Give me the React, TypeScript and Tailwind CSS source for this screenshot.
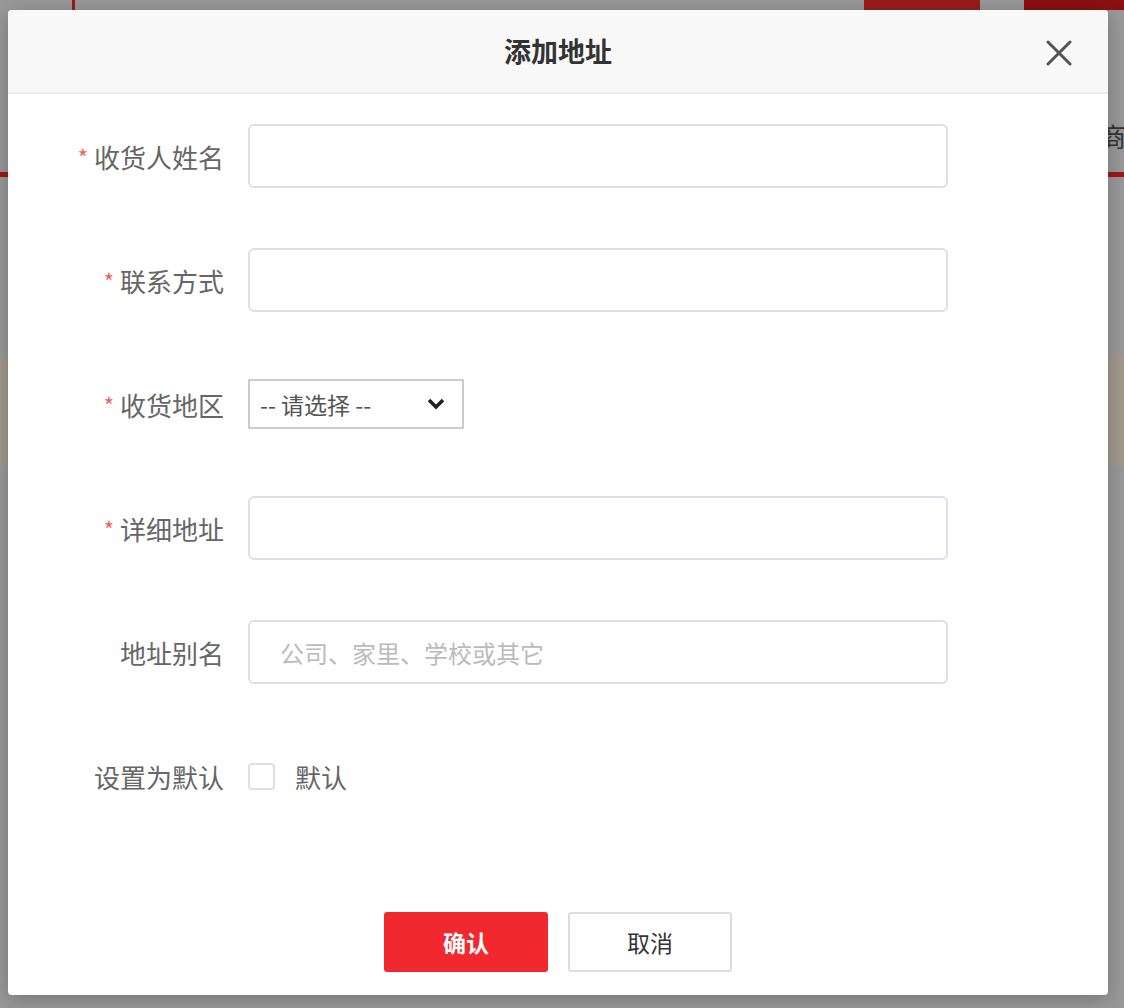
const font = { fontFamily: '"Noto Sans CJK SC", "Noto Sans", sans-serif' };

function Label({ text, required }: { text: string; required?: boolean }) {
  return (
    <div className="w-[240px] pr-[24px] flex justify-end items-center text-[26px] text-[#666]">
      {required && <span className="text-[#f06060] mr-[6px] text-[22px]">*</span>}
      {text}
    </div>
  );
}

function TextRow({ label, required, placeholder }: { label: string; required?: boolean; placeholder?: string }) {
  return (
    <div className="h-[124px] flex items-center">
      <Label text={label} required={required} />
      <input
        placeholder={placeholder}
        className="w-[700px] h-[64px] border-2 border-[#dcdfe6] rounded-[6px] px-[30px] text-[24px] text-[#333] placeholder:text-[#bbb] outline-none"
        style={font}
      />
    </div>
  );
}

export default function App() {
  return (
    <div className="relative w-[1124px] h-[1008px] bg-[#999] overflow-hidden" style={font}>
      {/* page behind overlay */}
      <div className="absolute left-[72px] top-0 w-[3px] h-[10px] bg-[#9b1b1b]" />
      <div className="absolute left-[864px] top-0 w-[116px] h-[10px] bg-[#9b1b1b]" />
      <div className="absolute left-[1024px] top-0 w-[100px] h-[10px] bg-[#8b1010]" />
      <div className="absolute left-0 top-[172px] w-[8px] h-[5px] bg-[#9b1b1b]" />
      <div className="absolute left-[1108px] top-[172px] w-[16px] h-[5px] bg-[#9b1b1b]" />
      <div className="absolute left-[1100px] top-[116px] text-[26px] text-[#333]">商</div>
      <div className="absolute left-0 top-[355px] w-[8px] h-[110px] bg-[#a39a8e]" />
      <div className="absolute left-[1108px] top-[355px] w-[16px] h-[110px] bg-[#a39a8e]" />

      <div className="absolute left-[8px] top-[10px] w-[1100px] h-[985px] bg-white rounded-[4px] shadow-[0_4px_20px_rgba(0,0,0,0.25)] flex flex-col overflow-hidden">
        <div className="h-[84px] bg-[#f8f8f8] border-b-2 border-[#ebebeb] flex items-center justify-center relative">
          <span className="text-[27px] font-bold text-[#333]">添加地址</span>
          <svg className="absolute right-[36px] top-[30px]" width="26" height="26" viewBox="0 0 26 26">
            <path d="M2 2L24 24M24 2L2 24" stroke="#555" strokeWidth="3" strokeLinecap="round" />
          </svg>
        </div>
        <div className="flex flex-col">
          <TextRow label="收货人姓名" required />
          <TextRow label="联系方式" required />
          <div className="h-[124px] flex items-center">
            <Label text="收货地区" required />
            <div className="w-[216px] h-[50px] border-2 border-[#ccc] flex items-center justify-between px-[10px] text-[23px] text-[#555]">
              <span>-- 请选择 --</span>
              <svg width="20" height="14" viewBox="0 0 20 14" className="mr-[6px]">
                <path d="M3 3L10 10L17 3" stroke="#222" strokeWidth="3.5" fill="none" />
              </svg>
            </div>
          </div>
          <TextRow label="详细地址" required />
          <TextRow label="地址别名" placeholder="公司、家里、学校或其它" />
          <div className="h-[124px] flex items-center">
            <Label text="设置为默认" />
            <div className="w-[27px] h-[27px] border-2 border-[#dcdfe6] rounded-[4px]" />
            <span className="ml-[20px] text-[26px] text-[#666]">默认</span>
          </div>
        </div>
        <div className="mt-[74px] flex justify-center gap-[20px]">
          <button className="w-[164px] h-[60px] bg-[#f2282f] rounded-[3px] text-white text-[23px] font-bold">确认</button>
          <button className="w-[164px] h-[60px] border-2 border-[#ddd] rounded-[3px] text-[#333] text-[23px] bg-white">取消</button>
        </div>
      </div>
    </div>
  );
}
